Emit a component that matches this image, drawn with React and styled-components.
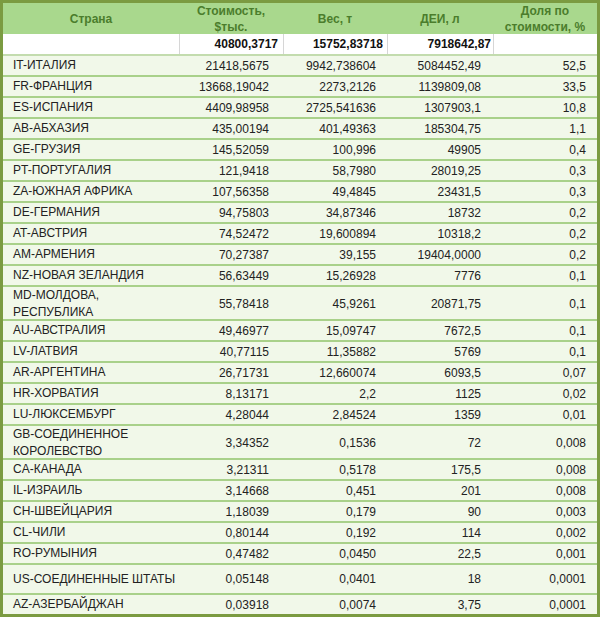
import React from "react";
import styled, { createGlobalStyle } from "styled-components";

const Global = createGlobalStyle`
  html, body { margin: 0; padding: 0; background: #ffffff; }
  body { font-family: "Liberation Sans", Arial, sans-serif; }
`;

const COLS = "176px 104px 104px 106px 1fr";

const Table = styled.div`
  width: 600px;
  box-sizing: border-box;
  border: 3px solid #7b9b41;
  font-family: "Liberation Sans", Arial, sans-serif;
  font-size: 12px;
  color: #222;
`;

const HeaderRow = styled.div`
  display: grid;
  grid-template-columns: ${COLS};
  height: 31px;
  background: #a9d88d;
`;

const HeaderCell = styled.div`
  display: flex;
  align-items: center;
  justify-content: center;
  text-align: center;
  font-weight: bold;
  color: #4b7d2c;
  line-height: 16px;
`;

const SummaryRow = styled.div`
  display: grid;
  grid-template-columns: ${COLS};
  height: 20px;
  background: #ffffff;
  border-bottom: 2px solid #c3dcae;
`;

const SummaryCell = styled.div`
  display: flex;
  align-items: center;
  justify-content: flex-end;
  padding-right: ${(p) => p.$pad}px;
  font-weight: bold;
  color: #111;
  border-left: ${(p) => (p.$first ? "none" : "1px solid #d6d6d6")};
`;

const DataRow = styled.div`
  display: grid;
  grid-template-columns: ${COLS};
  height: ${(p) => p.$h}px;
  background: #f1f8e9;
  border-bottom: ${(p) => (p.$last ? "none" : "2px solid #a9d18a")};
`;

const NameCell = styled.div`
  display: flex;
  align-items: center;
  padding-left: 10px;
  line-height: 17px;
  white-space: nowrap;
`;

const NumCell = styled.div`
  display: flex;
  align-items: center;
  justify-content: flex-end;
  padding-right: ${(p) => p.$pad}px;
  white-space: nowrap;
`;

const PADS = [14, 11, 12, 11];

const rows = [
  ["IT-ИТАЛИЯ", "21418,5675", "9942,738604", "5084452,49", "52,5"],
  ["FR-ФРАНЦИЯ", "13668,19042", "2273,2126", "1139809,08", "33,5"],
  ["ES-ИСПАНИЯ", "4409,98958", "2725,541636", "1307903,1", "10,8"],
  ["AB-АБХАЗИЯ", "435,00194", "401,49363", "185304,75", "1,1"],
  ["GE-ГРУЗИЯ", "145,52059", "100,996", "49905", "0,4"],
  ["PT-ПОРТУГАЛИЯ", "121,9418", "58,7980", "28019,25", "0,3"],
  ["ZA-ЮЖНАЯ АФРИКА", "107,56358", "49,4845", "23431,5", "0,3"],
  ["DE-ГЕРМАНИЯ", "94,75803", "34,87346", "18732", "0,2"],
  ["AT-АВСТРИЯ", "74,52472", "19,600894", "10318,2", "0,2"],
  ["AM-АРМЕНИЯ", "70,27387", "39,155", "19404,0000", "0,2"],
  ["NZ-НОВАЯ ЗЕЛАНДИЯ", "56,63449", "15,26928", "7776", "0,1"],
  [["MD-МОЛДОВА,", "РЕСПУБЛИКА"], "55,78418", "45,9261", "20871,75", "0,1", 32],
  ["AU-АВСТРАЛИЯ", "49,46977", "15,09747", "7672,5", "0,1"],
  ["LV-ЛАТВИЯ", "40,77115", "11,35882", "5769", "0,1"],
  ["AR-АРГЕНТИНА", "26,71731", "12,660074", "6093,5", "0,07"],
  ["HR-ХОРВАТИЯ", "8,13171", "2,2", "1125", "0,02"],
  ["LU-ЛЮКСЕМБУРГ", "4,28044", "2,84524", "1359", "0,01"],
  [["GB-СОЕДИНЕННОЕ", "КОРОЛЕВСТВО"], "3,34352", "0,1536", "72", "0,008", 32],
  ["CA-КАНАДА", "3,21311", "0,5178", "175,5", "0,008"],
  ["IL-ИЗРАИЛЬ", "3,14668", "0,451", "201", "0,008"],
  ["CH-ШВЕЙЦАРИЯ", "1,18039", "0,179", "90", "0,003"],
  ["CL-ЧИЛИ", "0,80144", "0,192", "114", "0,002"],
  ["RO-РУМЫНИЯ", "0,47482", "0,0450", "22,5", "0,001"],
  ["US-СОЕДИНЕННЫЕ ШТАТЫ", "0,05148", "0,0401", "18", "0,0001", 28],
  ["AZ-АЗЕРБАЙДЖАН", "0,03918", "0,0074", "3,75", "0,0001"],
];

export default function App() {
  return (
    <>
      <Global />
      <Table>
        <HeaderRow>
          <HeaderCell>Страна</HeaderCell>
          <HeaderCell>
            Стоимость,
            <br />
            $тыс.
          </HeaderCell>
          <HeaderCell>Вес, т</HeaderCell>
          <HeaderCell>ДЕИ, л</HeaderCell>
          <HeaderCell>
            Доля по
            <br />
            стоимости, %
          </HeaderCell>
        </HeaderRow>
        <SummaryRow>
          <SummaryCell $first $pad={0} />
          <SummaryCell $pad={5}>40800,3717</SummaryCell>
          <SummaryCell $pad={4}>15752,83718</SummaryCell>
          <SummaryCell $pad={2}>7918642,87</SummaryCell>
          <SummaryCell $pad={4} />
        </SummaryRow>
        {rows.map((r, i) => {
          const [name, ...rest] = r;
          const h = rest.length > 4 ? rest[4] : 19;
          const vals = rest.slice(0, 4);
          return (
            <DataRow key={i} $h={h} $last={i === rows.length - 1}>
              <NameCell>
                {Array.isArray(name) ? (
                  <span>
                    {name[0]}
                    <br />
                    {name[1]}
                  </span>
                ) : (
                  name
                )}
              </NameCell>
              {vals.map((v, j) => (
                <NumCell key={j} $pad={PADS[j]}>
                  {v}
                </NumCell>
              ))}
            </DataRow>
          );
        })}
      </Table>
    </>
  );
}
